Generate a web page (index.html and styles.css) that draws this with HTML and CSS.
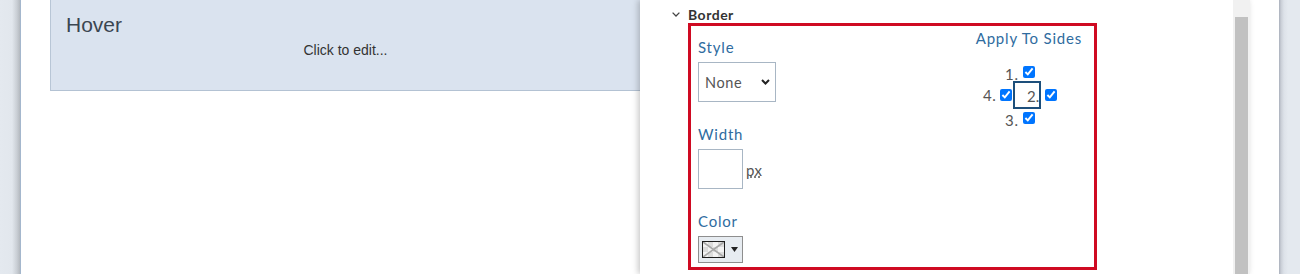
FILE: index.html
```html
<!DOCTYPE html>
<html lang="en">
<head>
<meta charset="utf-8">
<title>Border editor</title>
<link rel="stylesheet" href="styles.css">
</head>
<body>
<div class="page">
  <div class="gutter gutter-left"></div>
  <main class="canvas">
    <section class="hover-box">
      <h2 class="hover-title">Hover</h2>
      <p class="hover-hint">Click to edit...</p>
    </section>
    <aside class="panel">
      <div class="panel-body">
        <div class="section-head">
          <svg class="head-chevron" width="8" height="5" viewBox="0 0 8 5"><path d="M0.6 0.6 L4 4 L7.4 0.6" fill="none" stroke="#444" stroke-width="1.3"/></svg>
          <span>Border</span>
        </div>
        <div class="border-box">
          <div class="col-left">
            <div class="field">
              <div class="lbl">Style</div>
              <div class="select"><span>None</span><svg width="9" height="6" viewBox="0 0 9 6"><path d="M1 1 L4.5 4.5 L8 1" fill="none" stroke="#222" stroke-width="2"/></svg></div>
            </div>
            <div class="field">
              <div class="lbl">Width</div>
              <div class="width-row">
                <div class="num-input"></div>
                <abbr class="unit" title="pixels">px</abbr>
              </div>
            </div>
            <div class="field">
              <div class="lbl">Color</div>
              <div class="color-btn">
                <svg class="swatch" width="23" height="17" viewBox="0 0 23 17">
                  <rect x="0" y="0" width="23" height="17" fill="#dcdcdc"/>
                  <rect x="1" y="1" width="5" height="5" fill="#f3f3f3"/>
                  <rect x="11" y="1" width="5" height="5" fill="#f3f3f3"/>
                  <rect x="6" y="6" width="5" height="5" fill="#f3f3f3"/>
                  <rect x="16" y="6" width="6" height="5" fill="#f3f3f3"/>
                  <rect x="1" y="11" width="5" height="5" fill="#f3f3f3"/>
                  <rect x="11" y="11" width="5" height="5" fill="#f3f3f3"/>
                  <path d="M1 1 L22 16 M22 1 L1 16" stroke="#a8a8a8" stroke-width="1.6"/>
                  <rect x="0.5" y="0.5" width="22" height="16" fill="none" stroke="#1e1e1e" stroke-width="1"/>
                </svg>
                <svg width="7" height="5" viewBox="0 0 7 5"><path d="M0 0 L7 0 L3.5 5 Z" fill="#222"/></svg>
              </div>
            </div>
          </div>
          <div class="col-right">
            <div class="lbl">Apply To Sides</div>
            <div class="sides">
              <div class="cell top"><span class="num">1.</span><input type="checkbox" checked></div>
              <div class="cell left"><span class="num">4.</span><input type="checkbox" checked></div>
              <div class="side-box">2.</div>
              <div class="cell right"><input type="checkbox" checked></div>
              <div class="cell bottom"><span class="num">3.</span><input type="checkbox" checked></div>
            </div>
          </div>
        </div>
      </div>
      <div class="scrollbar"><div class="thumb"></div></div>
    </aside>
  </main>
  <div class="gutter gutter-right"></div>
</div>
</body>
</html>
```
FILE: styles.css
```css
* { box-sizing: border-box; }
html, body { margin: 0; padding: 0; }
body {
  width: 1300px;
  height: 274px;
  overflow: hidden;
  background: #fff;
  font-family: Lato, "Open Sans", sans-serif;
}
.page { display: flex; height: 274px; }
.gutter { flex: none; height: 100%; }
.gutter-left {
  width: 21px;
  background: linear-gradient(to right, #e4e9ef 0, #e2e7ed 12px, #c9ced4 17px, #b4b9bf 20px);
  border-right: 1px solid #a4b7cd;
}
.gutter-right {
  width: 21px;
  background: linear-gradient(to right, #a9afbb 0, #c9ced6 2px, #dde2e9 5px, #e4e9ef 9px);
}
.canvas { flex: 1; position: relative; overflow: hidden; }

.hover-box {
  margin-left: 29px;
  width: 590px;
  height: 91px;
  background: #dae3ef;
  border-left: 1px solid #b8c6d6;
  border-bottom: 1px solid #b3c2d3;
  padding-top: 13px;
}
.hover-title {
  margin: 0;
  padding-left: 15px;
  font: 400 21px/24px "Liberation Sans", Arial, sans-serif;
  color: #3a4651;
}
.hover-hint {
  margin: 4px 0 0;
  font: 14px/18px "Liberation Sans", Arial, sans-serif;
  color: #333;
  text-align: center;
}

.panel {
  position: absolute;
  left: 619px;
  top: 0;
  bottom: 0;
  width: 610px;
  background: #fff;
  box-shadow: -2px 0 6px rgba(0, 0, 0, 0.22);
  display: flex;
}
.panel-body { flex: 1; padding: 5px 0 0 32px; }
.section-head {
  display: flex;
  align-items: center;
  gap: 8px;
  height: 18px;
  font-size: 14px;
  font-weight: 700;
  letter-spacing: 0.5px;
  color: #333;
}
.border-box {
  margin-left: 16px;
  width: 409px;
  height: 247px;
  border: 3px solid #cf0a22;
  display: flex;
  justify-content: space-between;
}
.col-left {
  padding: 11px 0 0 7px;
  display: flex;
  flex-direction: column;
  gap: 22px;
}
.lbl {
  font-size: 15px;
  line-height: 20px;
  letter-spacing: 0.8px;
  color: #2f6c9f;
  margin-bottom: 5px;
}
.select {
  width: 78px;
  height: 40px;
  border: 1px solid #a8b6c4;
  display: flex;
  align-items: center;
  justify-content: space-between;
  padding: 0 5px 0 6px;
  font-size: 14.5px;
  letter-spacing: 0.6px;
  color: #555;
}
.width-row { display: flex; align-items: center; gap: 3px; }
.num-input {
  width: 45px;
  height: 40px;
  border: 1px solid #a8b6c4;
}
.unit {
  font-size: 15px;
  letter-spacing: 0.5px;
  color: #555;
  text-decoration: underline dotted;
  margin-top: 2px;
}
.color-btn {
  width: 45px;
  height: 27px;
  border: 1px solid #8e8e8e;
  background: #e7ecf1;
  display: flex;
  align-items: center;
  gap: 6px;
  padding-left: 3px;
}
.swatch { display: block; }

.col-right { padding: 2px 12px 0 0; }
.col-right .lbl { margin-bottom: 15px; }
.sides {
  display: grid;
  grid-template-columns: 1fr 28px 1fr;
  grid-template-rows: 18px 28px 18px;
  padding-right: 3px;
}
.cell { display: flex; align-items: center; }
.num { font-size: 15px; line-height: 18px; letter-spacing: 0.6px; color: #555; }
.top, .bottom { grid-column: 2; justify-content: center; }
.top { grid-row: 1; }
.bottom { grid-row: 3; }
.top .num, .bottom .num { margin-left: -15px; margin-right: 4px; padding-top: 4px; }
.left { grid-column: 1; grid-row: 2; justify-content: flex-end; gap: 4px; padding-right: 1px; }
.right { grid-column: 3; grid-row: 2; padding-left: 4px; }
.cell input { width: 12px; height: 12px; margin: 0; }
.side-box {
  grid-column: 2;
  grid-row: 2;
  border: 2px solid #1d4f7b;
  font-size: 15px;
  line-height: 26px;
  color: #555;
  text-align: right;
}

.scrollbar {
  width: 17px;
  flex: none;
  background: #f1f1f1;
  padding: 17px 2px 0;
  display: flex;
  flex-direction: column;
}
.thumb { flex: 1; background: #c1c1c1; }
```
